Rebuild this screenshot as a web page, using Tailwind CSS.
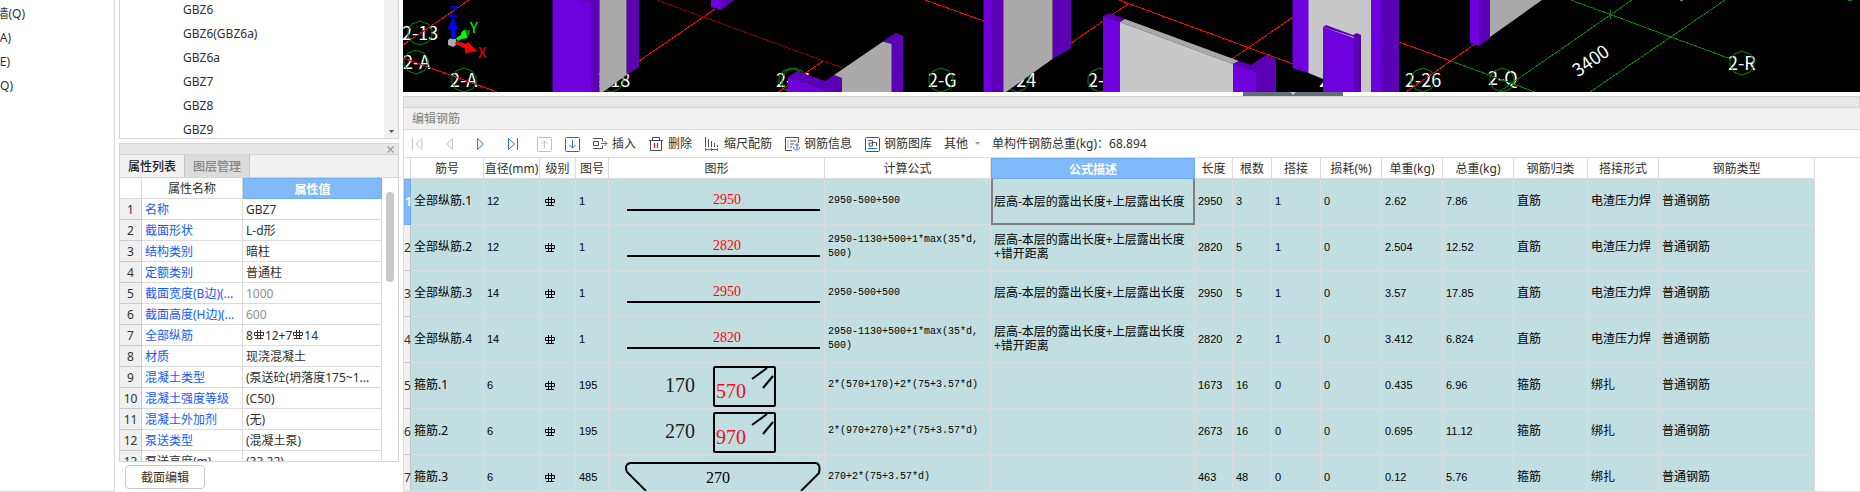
<!DOCTYPE html>
<html lang="zh-CN">
<head>
<meta charset="utf-8">
<title>编辑钢筋</title>
<script src="https://cdn.jsdelivr.net/npm/@tailwindcss/browser@4"></script>
</head>
<body class="flex h-screen gap-1 overflow-hidden bg-white font-['Noto_Sans','Noto_Sans_CJK_SC',sans-serif] text-xs text-[#303030]">

<nav class="w-[115px] shrink-0 overflow-hidden border-r border-b border-[#d9d9d9] pt-0.5" aria-label="构件类型">
  <ul class="leading-6">
    <li class="flex w-[25px] justify-end whitespace-nowrap">墙(Q)</li>
    <li class="flex w-[11px] justify-end whitespace-nowrap">(A)</li>
    <li class="flex w-[10px] justify-end whitespace-nowrap">(E)</li>
    <li class="flex w-[13px] justify-end whitespace-nowrap">(Q)</li>
  </ul>
</nav>

<aside class="flex w-[280px] shrink-0 flex-col">
  <section class="flex h-[139px] shrink-0 overflow-hidden border-x border-b border-[#d4d4d4]">
    <ul class="-mt-0.5 flex-1 pl-[63px] leading-6">
      <li>GBZ6</li><li>GBZ6(GBZ6a)</li><li>GBZ6a</li><li>GBZ7</li><li>GBZ8</li><li>GBZ9</li>
    </ul>
    <div class="flex w-3.5 items-end justify-center bg-[#f1f1f1] pb-[5px]">
      <svg width="5" height="3"><path d="M0 0h5L2.500 3z" fill="#4a4f6a"/></svg>
    </div>
  </section>

  <section class="mt-1 flex min-h-0 flex-1 flex-col">
    <div class="flex h-3 shrink-0 items-center justify-end border border-[#d4d4d4] bg-[#e7e7e7] pr-1">
      <button aria-label="关闭"><svg class="block" width="7" height="7"><path d="M.5.5l6 6M6.500.5l-6 6" stroke="#9a9a9a" stroke-width="1.300"/></svg></button>
    </div>
    <div class="flex h-[23px] shrink-0 border-x border-b border-[#d4d4d4] bg-[#f1f1f1]" role="tablist">
      <button role="tab" class="w-[65px] border-r border-[#c4c4c4] pt-0.5 font-medium text-[#202020]">属性列表</button>
      <button role="tab" class="w-[65px] border-r border-[#c4c4c4] bg-[#dcdcdc] pt-0.5 font-medium text-[#858585]">图层管理</button>
    </div>
    <div class="flex h-[284px] shrink-0 overflow-hidden border-x border-b border-[#d4d4d4]">
      <table class="w-[262px] table-fixed border-separate border-spacing-0 self-start whitespace-nowrap">
        <colgroup><col class="w-[22px]"><col class="w-[101px]"><col class="w-[139px]"></colgroup>
        <thead><tr class="h-[21px]">
          <th class="border-r border-b border-[#dcdcdc] p-0"></th>
          <th class="border-r border-b border-[#dcdcdc] p-0 pt-0.5 leading-[18px] font-normal">属性名称</th>
          <th class="border border-[#6fadf0] bg-[#81bafa] p-0 pt-0.5 leading-4 font-bold text-white">属性值</th>
        </tr></thead>
        <tbody id="props"></tbody>
      </table>
      <div class="flex flex-1 justify-center pt-3.5"><div class="h-[90px] w-2 rounded-full bg-[#c9c9c9]"></div></div>
    </div>
    <div class="flex pt-[3px] pl-1.5">
      <button class="h-6 w-20 rounded border border-[#c8c8c8] bg-white pt-0.5 leading-5">截面编辑</button>
    </div>
  </section>
</aside>

<main class="flex min-w-0 flex-1 flex-col">
  <svg class="block h-[92px] w-full shrink-0 bg-black" viewBox="403 0 1457 92" preserveAspectRatio="xMinYMin slice" font-family="Noto Sans CJK SC, sans-serif" font-size="18" fill="#fff">
    <defs><path id="hub" d="M0-12L8-9 12-3V3L8 9 0 12-8 9-12 3V-3L-8-9z" fill="none" stroke="#008a00"/></defs>
    <!-- labels -->
    <text x="402" y="40">2-13</text><text x="403" y="69">2-A</text><text x="450" y="87">2-A</text>
    <text x="594" y="87">2-18</text><text x="776" y="87">2-21</text><text x="928" y="87">2-G</text>
    <text x="1000" y="87">2-24</text><text x="1088" y="87">2-25</text><text x="1319" y="87">2-P</text>
    <text x="1405" y="87">2-26</text><text x="1488" y="85">2-Q</text><text x="1728" y="70">2-R</text>
    <text x="1591" y="67" text-anchor="middle" transform="rotate(-35 1591 61)">3400</text>
    <text x="1680" y="2" transform="rotate(-35 1680 2)">9</text>
    <!-- axis bubbles -->
    <use href="#hub" x="420" y="33"/><use href="#hub" x="416" y="62"/><use href="#hub" x="464" y="80"/><use href="#hub" x="611" y="80"/>
    <use href="#hub" x="791" y="80"/><use href="#hub" x="794" y="80"/><use href="#hub" x="941" y="80"/><use href="#hub" x="1017" y="80"/>
    <use href="#hub" x="1100" y="80"/><use href="#hub" x="1423" y="80"/><use href="#hub" x="1502" y="80"/><use href="#hub" x="1742" y="63"/>
    <!-- grid lines -->
    <g fill="none" stroke="#ff0000" shape-rendering="crispEdges">
      <path d="M403 45L469 0M403 58L497 92M639 61L715 9M778 92L823 61M925 0L984 21M1071 43L1128 4M1119 0L1293 64M1232 59L1293 17M1399 42L1451 61M1475 44L1406 92"/>
      <path d="M657 0L843 68" stroke="#7c0000"/>
      <path d="M1451 61L1535 92M1571 0L1728 58M1632 0L1499 92M1725 0L1590 92M1607 13l8 3M1610 9l1 10M1848 0h4" stroke="#008200"/>
    </g>
    <!-- walls and columns -->
    <path d="M552.500 0H591V92H552.500zM711 0H722L721 10 711 7zM788 77L825 90V92H788zM983.500 0H992V92H983.500zM1103 16L1120 22V92H1103zM1233 63L1256 72V92H1233zM1292.500 0H1309V73L1292.500 68z" fill="#6d00dc"/>
    <path d="M581 0L591 3V92H599.500V0zM626.500 0H639V67L626.500 75zM722 0H734L721 10zM788 77L797 71 825 81 834 75 842 78V92H825V90zM883 41L896 33 903 36V92H891V44zM991.500 0H1004V92H991.500zM1052.500 0H1071V48L1052.500 59zM1103 16L1109 13 1125 19 1120 22z" fill="#5c00b6"/>
    <path d="M599.500 0H626.500V75L603 92H599.500zM834 75L883 41.500 891.500 44V92H842V78zM1003.500 0H1052.500V59L1006 92H1003.500zM1125 19L1239 61 1233 64 1120 22zM1490 0H1542L1490 37z" fill="#a9a9a9"/>
    <path d="M1120 22L1233 64V92H1120zM1308.500 0H1371V92H1360L1359 92 1323 79 1308.500 73z" fill="#c8c8c8"/>
    <path d="M1233 64L1239 61 1251 65 1266 55 1276 59V92H1256V72z" fill="#5c00b6"/>
    <path d="M1323 27L1354 38V92H1323zM1371 0H1381V92H1371zM1470 0H1479V46L1470 43z" fill="#6d00dc"/>
    <path d="M1323 27L1326 25 1353 35 1357 33 1361 35V92H1354V37zM1381 0H1399V92H1381zM1479 0H1490V38L1479 46z" fill="#5c00b6"/>
    <!-- axis tripod -->
    <path d="M448 40l3-2 5 1v6l-3 2-5-2z" fill="#aaa"/>
    <path d="M451 39V29h-3l5-12 5 12h-3v10z" fill="#00f"/>
    <path d="M456 38l5-3a5 5 0 0 1 4-5l5 1-3 7-6 1-3 2z" fill="#0f0"/><path d="M465 30l5 0-3 7z" fill="#070"/>
    <path d="M456 41l10 3 2-2 9 9-12 2v-5l-10-4z" fill="#f00"/>
    <g font-size="15"><text x="449" y="17" fill="#00f">Z</text><text x="470" y="33" fill="#0f0">Y</text><text x="478" y="58" fill="#f00">X</text></g>
  </svg>
  <div class="flex h-1 shrink-0 pl-[840px]">
    <button class="flex w-[100px] justify-center bg-[#636e78]" aria-label="折叠"><svg class="block" width="8" height="4"><path d="M1 0h6L4 3z" fill="#c8ccd0"/></svg></button>
  </div>
  <div class="h-3 shrink-0 border border-[#d4d4d4] bg-[#e7e7e7]"></div>
  <h1 class="h-[22px] shrink-0 border-b border-l border-[#d9d9d9] bg-[#f1f1f1] pl-2 leading-[22px] text-[#808080]">编辑钢筋</h1>

  <div class="flex h-7 shrink-0 items-center gap-3 border-b border-l border-[#dcdcdc] pl-2 whitespace-nowrap" role="toolbar">
    <div class="flex gap-4">
      <button aria-label="首行"><svg class="block" width="16" height="16" fill="none" stroke="#c4c4c4"><path d="M.5 2v12M10 2.500L4 8l6 5.500z"/></svg></button>
      <button aria-label="上一行"><svg class="block" width="16" height="16" fill="none" stroke="#c4c4c4"><path d="M8.500 2.500L3 8l5.500 5.500z"/></svg></button>
      <button aria-label="下一行"><svg class="block" width="16" height="16" fill="none" stroke="#1d78e6"><path d="M1.500 2.500L7.500 8l-6 5.500z"/></svg></button>
      <button aria-label="末行"><svg class="block" width="16" height="16" fill="none" stroke="#1d78e6"><path d="M.5 2.500L6.500 8l-6 5.500zM9.500 2v12"/></svg></button>
    </div>
    <button aria-label="上移"><svg class="block" width="16" height="16" fill="none" stroke="#c0c0c0"><rect x="1.500" y="1.500" width="14" height="14" rx="1"/><path d="M8.500 12V5M5.500 8l3-3 3 3"/></svg></button>
    <button aria-label="下移"><svg class="block" width="16" height="16" fill="none" stroke="#5a5f70"><rect x="1.500" y="1.500" width="14" height="14" rx="1"/><path d="M8.500 4v8M5.500 9l3 3 3-3" stroke="#1d78e6"/></svg></button>
    <button class="flex items-center gap-1"><svg width="16" height="16" fill="none" stroke="#4a5062"><path d="M1 2.500h9.500v3M1 12.500h9.500v-3M1.500 5.500h5v4h-5z"/><path d="M9 7.500h6M12.500 5l2.500 2.500-2.500 2.500" stroke="#1d78e6"/></svg>插入</button>
    <button class="flex items-center gap-1"><svg width="16" height="16" fill="none" stroke="#4a5062"><path d="M1 4.500h14M4.500 4V1.500h7V4M2.500 5v9.500h11V5"/><path d="M6.500 7v5M9.500 7v5" stroke="#e02020" stroke-width="1.300"/></svg>删除</button>
    <button class="flex items-center gap-1"><svg width="16" height="16" fill="none" stroke="#4a5062"><path d="M1.500 1v10M4.500 3v8M7.500 5v6M10.500 7v4M13.500 9v2"/><path d="M1 13.500h13M1.500 12v3M7.500 12v3M13.500 12v3" stroke="#1d78e6"/></svg>缩尺配筋</button>
    <button class="flex items-center gap-1"><svg width="16" height="16" fill="none" stroke="#4a5062"><path d="M8 14.500H1.500v-13h13V7M3.500 5h1M6 5h6M3.500 8h1M6 8h4M3.500 11h1M6 11h2"/><path d="M13 7v6M11 9h4M9.500 11c0 4 6 4 6 0" stroke="#1d78e6"/></svg>钢筋信息</button>
    <button class="flex items-center gap-1"><svg width="16" height="16" fill="none" stroke="#4a5062"><rect x="1.500" y="1.500" width="14" height="14" rx="1"/><path d="M4 4.500h4.500V10M8.500 7H5v3h3.500M8.500 6.500h4V10"/><path d="M4 12.500h9" stroke="#1d78e6"/></svg>钢筋图库</button>
    <button class="flex items-center gap-[7px]" aria-haspopup="menu">其他<svg width="5" height="3"><path d="M0 0h5L2.500 3z" fill="#9a9a9a"/></svg></button>
    <p>单构件钢筋总重(kg)：68.894</p>
  </div>

  <div class="min-h-0 flex-1 overflow-hidden border-b border-l border-[#dcdcdc]">
    <table class="w-[1411px] table-fixed border-separate border-spacing-0">
      <colgroup>
        <col class="w-[7px]"><col class="w-[73px]"><col class="w-[56px]"><col class="w-[36px]"><col class="w-[33px]"><col class="w-[216px]"><col class="w-[166px]"><col class="w-[204px]"><col class="w-[38px]"><col class="w-[39px]"><col class="w-[49px]"><col class="w-[61px]"><col class="w-[61px]"><col class="w-[71px]"><col class="w-[74px]"><col class="w-[71px]"><col class="w-[156px]">
      </colgroup>
      <thead><tr id="heads" class="h-[21px]"></tr></thead>
      <tbody id="bars"></tbody>
    </table>
  </div>
</main>

<script>
const glyph = '<path d="M.5 2.500h9v3h-9zM3.500 0v8M6.500 0v8M1 8.500h8"/>';
const grade = `<svg class="block" width="10" height="9" fill="none" stroke="#000" role="img" aria-label="HRB400">${glyph}</svg>`;
const inlineGrade = `<svg class="mx-px mb-px inline-block align-baseline" width="10" height="9" fill="none" stroke="#303030" role="img" aria-label="HRB400">${glyph}</svg>`;

const props = [
  ['名称', 'GBZ7'], ['截面形状', 'L-d形'], ['结构类别', '暗柱'], ['定额类别', '普通柱'],
  ['截面宽度(B边)(...', '1000', 'muted'], ['截面高度(H边)(...', '600', 'muted'],
  ['全部纵筋', `8${inlineGrade}12+7${inlineGrade}14`], ['材质', '现浇混凝土'], ['混凝土类型', '(泵送砼(坍落度175~1...'],
  ['混凝土强度等级', '(C50)'], ['混凝土外加剂', '(无)'], ['泵送类型', '(混凝土泵)'], ['泵送高度(m)', '(33.22)', 'plain'],
];
document.getElementById('props').innerHTML = props.map(([name, value, kind], i) => `
  <tr class="h-[21px]">
    <td class="border-r border-b border-[#c8c8c8] bg-[#f0f0f0] p-0 pt-0.5 text-center leading-[18px]">${i + 1}</td>
    <td class="border-r border-b border-[#dcdcdc] p-0 pt-0.5 pl-[3px] leading-[18px] ${kind === 'plain' ? '' : 'text-[#1259ff]'}">${name}</td>
    <td class="border-r border-b border-[#dcdcdc] p-0 pt-0.5 pl-[3px] leading-[18px] ${kind === 'muted' ? 'text-[#909090]' : ''}">${value}</td>
  </tr>`).join('');

const heads = ['', '筋号', '直径(mm)', '级别', '图号', '图形', '计算公式', '公式描述', '长度', '根数', '搭接', '损耗(%)', '单重(kg)', '总重(kg)', '钢筋归类', '搭接形式', '钢筋类型'];
document.getElementById('heads').innerHTML = heads.map((h) => h === '公式描述'
  ? `<th class="border border-[#6fadf0] bg-[#81bafa] p-0 pt-0.5 leading-4 font-bold text-white">${h}</th>`
  : `<th class="border-r border-b border-[#dcdcdc] p-0 pt-0.5 leading-[18px] font-normal whitespace-nowrap">${h}</th>`).join('');

const straight = (n) => `<svg class="block" width="215" height="45" font-family="Liberation Serif, serif"><text x="118" y="25" text-anchor="middle" font-size="14" fill="#f00">${n}</text><path d="M18 31h193" stroke="#000" stroke-width="2"/></svg>`;
const hoop = (a, b) => `<svg class="block" width="215" height="45" font-family="Liberation Serif, serif" font-size="20"><text x="56" y="29" fill="#202020">${a}</text><rect x="105" y="4" width="61" height="39" rx="1" fill="none" stroke="#000" stroke-width="2"/><path d="M143 16l15-11M154 25l10-12" stroke="#000" stroke-width="2"/><text x="107" y="35" fill="#f01020">${b}</text></svg>`;
const tie = `<svg class="block" width="215" height="45" font-family="Liberation Serif, serif" font-size="16"><path d="M37 36L18 17c-2-5-1-8 3-9h186c4 1 4 5 3 10L192 36" fill="none" stroke="#000" stroke-width="2"/><text x="109" y="28" text-anchor="middle">270</text></svg>`;

const over = '层高-本层的露出长度+上层露出长度';
const rows = [
  ['全部纵筋.1', 12, 1, straight(2950), '2950-500+500', over, 2950, 3, 1, 0, '2.62', '7.86', '直筋', '电渣压力焊'],
  ['全部纵筋.2', 12, 1, straight(2820), '2950-1130+500+1*max(35*d,<br>500)', over + '<br>+错开距离', 2820, 5, 1, 0, '2.504', '12.52', '直筋', '电渣压力焊'],
  ['全部纵筋.3', 14, 1, straight(2950), '2950-500+500', over + '<br>+错开距离', 2950, 5, 1, 0, '3.57', '17.85', '直筋', '电渣压力焊'],
  ['全部纵筋.4', 14, 1, straight(2820), '2950-1130+500+1*max(35*d,<br>500)', over + '<br>+错开距离', 2820, 2, 1, 0, '3.412', '6.824', '直筋', '电渣压力焊'],
  ['箍筋.1', 6, 195, hoop(170, 570), '2*(570+170)+2*(75+3.57*d)', '', 1673, 16, 0, 0, '0.435', '6.96', '箍筋', '绑扎'],
  ['箍筋.2', 6, 195, hoop(270, 970), '2*(970+270)+2*(75+3.57*d)', '', 2673, 16, 0, 0, '0.695', '11.12', '箍筋', '绑扎'],
  ['箍筋.3', 6, 485, tie, '270+2*(75+3.57*d)', '', 463, 48, 0, 0, '0.12', '5.76', '箍筋', '绑扎'],
];
rows[2][5] = over;
const text = (v) => `<td class="border-r border-b border-[#dcdcdc] p-0 pb-px pl-[3px]">${v}</td>`;
const num = (v) => `<td class="border-r border-b border-[#dcdcdc] p-0 pb-px pl-[3px] font-['Liberation_Sans',sans-serif] text-[11px] leading-[14px]">${v}</td>`;
const formula = (v) => `<td class="border-r border-b border-[#dcdcdc] p-0 pb-px pl-[3px] font-['Liberation_Mono',monospace] text-[10px] leading-[14px]">${v}</td>`;
document.getElementById('bars').innerHTML = rows.map((r, i) => `
  <tr class="h-[46px] bg-[#c1dee0] leading-[14px] whitespace-nowrap text-black">
    ${i === 0
      ? '<th class="border border-[#6fadf0] bg-[#81bafa] p-0 font-bold text-white"><div class="w-0">1</div></th>'
      : `<th class="border-r border-b border-[#c4c4c4] bg-[#f0f0f0] p-0 font-normal text-[#303030]"><div class="w-0">${i + 1}</div></th>`}
    ${text(r[0])}${num(r[1])}
    <td class="border-r border-b border-[#dcdcdc] p-0 pl-[5px]">${grade}</td>
    ${num(r[2])}
    <td class="border-r border-b border-[#dcdcdc] p-0">${r[3]}</td>
    ${formula(r[4])}
    ${i === 0 ? `<td class="border-x-2 border-b-2 border-[#808080] p-0 pt-0.5 pl-px">${r[5]}</td>` : text(r[5])}
    ${r.slice(6, 12).map(num).join('')}${text(r[12])}${text(r[13])}${text('普通钢筋')}
  </tr>`).join('');
</script>
</body>
</html>
